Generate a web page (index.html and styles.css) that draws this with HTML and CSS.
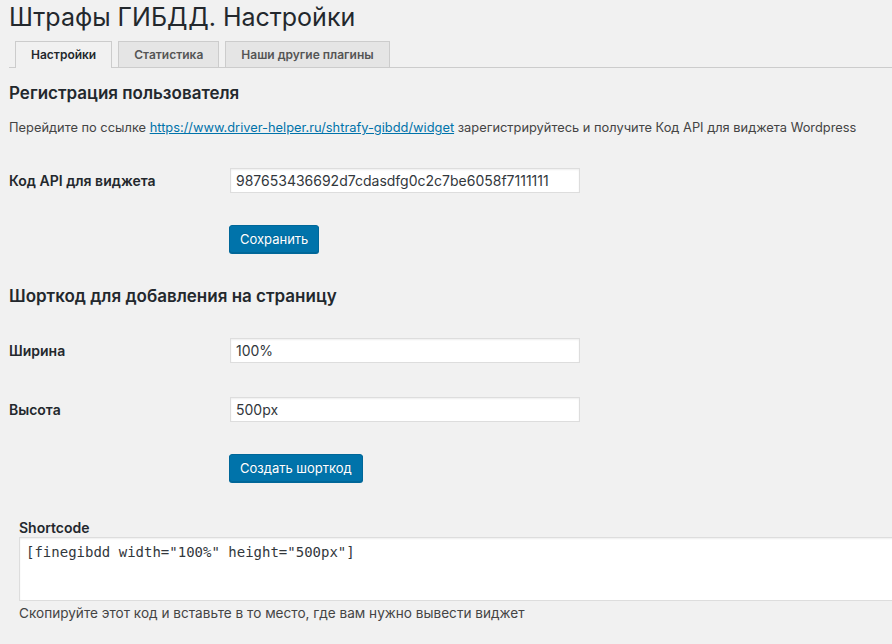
FILE: index.html
```html
<!DOCTYPE html>
<html lang="ru">
<head>
<meta charset="utf-8">
<title>Штрафы ГИБДД. Настройки</title>
<link rel="stylesheet" href="styles.css">
</head>
<body>
<div class="wrap">
  <h1 class="page-title">Штрафы ГИБДД. Настройки</h1>
  <nav class="tabs">
    <a class="tab tab-active" href="#">Настройки</a>
    <a class="tab" href="#">Статистика</a>
    <a class="tab" href="#">Наши другие плагины</a>
  </nav>

  <h2 class="section-title first">Регистрация пользователя</h2>
  <p class="intro">Перейдите по ссылке <a class="link" href="#">https://www.driver-helper.ru/shtrafy-gibdd/widget</a> зарегистрируйтесь и получите Код API для виджета Wordpress</p>

  <div class="form-row row-api">
    <label class="field-label">Код API для виджета</label>
    <input class="field-input" type="text" value="987653436692d7cdasdfg0c2c7be6058f7111111">
  </div>
  <div class="button-row btn-save">
    <button class="button-primary">Сохранить</button>
  </div>

  <h2 class="section-title second">Шорткод для добавления на страницу</h2>

  <div class="form-row row-width">
    <label class="field-label">Ширина</label>
    <input class="field-input" type="text" value="100%">
  </div>
  <div class="form-row row-height">
    <label class="field-label">Высота</label>
    <input class="field-input" type="text" value="500px">
  </div>
  <div class="button-row btn-create">
    <button class="button-primary">Создать шорткод</button>
  </div>

  <div class="shortcode-block">
    <div class="shortcode-label">Shortcode</div>
    <textarea class="shortcode-area">[finegibdd width="100%" height="500px"]</textarea>
    <p class="shortcode-help">Скопируйте этот код и вставьте в то место, где вам нужно вывести виджет</p>
  </div>
</div>
</body>
</html>
```

FILE: styles.css
```css
html, body {
  margin: 0;
  padding: 0;
  overflow: hidden;
}
body {
  background: #f1f1f1;
  color: #444;
  font-family: Inter, "Noto Sans", "Liberation Sans", sans-serif;
  font-size: 13px;
  width: 892px;
  height: 644px;
}
.wrap {
  padding: 2px 0 0 9px;
  overflow: hidden;
}
.page-title {
  margin: 0;
  font-size: 25px;
  line-height: 30px;
  font-weight: 400;
  color: #23282d;
}
.tabs {
  margin-top: 9px;
  display: flex;
  height: 26px;
  border-bottom: 1px solid #ccc;
}
.tab {
  display: block;
  margin-left: 6px;
  padding: 0 15px;
  height: 25px;
  line-height: 25px;
  border: 1px solid #ccc;
  border-bottom: none;
  background: #e5e5e5;
  color: #555;
  font-size: 12px;
  font-weight: 600;
  text-decoration: none;
}
.tab-active {
  background: #f1f1f1;
  color: #23282d;
  height: 26px;
  margin-bottom: -1px;
}
.section-title {
  margin: 0;
  font-size: 17px;
  line-height: 22px;
  font-weight: 600;
  color: #23282d;
}
.section-title.first { margin-top: 14px; }
.section-title.second { margin-top: 32px; }
.intro {
  margin: 14px 0 0;
  line-height: 20px;
  font-size: 12.85px;
  color: #444;
}
.link {
  color: #0073aa;
  text-decoration: underline;
}
.form-row {
  display: flex;
  align-items: center;
  height: 25px;
}
.row-api { margin-top: 30px; }
.row-width { margin-top: 31px; }
.row-height { margin-top: 34px; }
.field-label {
  width: 221px;
  flex: none;
  font-size: 14px;
  font-weight: 600;
  color: #23282d;
}
.field-input {
  box-sizing: border-box;
  width: 350px;
  height: 25px;
  margin: 0;
  padding: 0 5px;
  border: 1px solid #ddd;
  box-shadow: inset 0 1px 2px rgba(0, 0, 0, 0.07);
  background: #fff;
  color: #32373c;
  font-family: Inter, "Noto Sans", "Liberation Sans", sans-serif;
  font-size: 14px;
  outline: none;
}
.button-row {
  padding-left: 220px;
  display: flex;
}
.btn-save { margin-top: 32px; }
.btn-create { margin-top: 32px; }
.button-primary {
  box-sizing: border-box;
  height: 28px;
  margin: 0;
  padding: 0 10px;
  background: #0073aa;
  border: 1px solid #006799;
  border-radius: 3px;
  box-shadow: 0 1px 0 #006799;
  color: #fff;
  font-family: Inter, "Noto Sans", "Liberation Sans", sans-serif;
  font-size: 13px;
  line-height: 26px;
  text-shadow: 0 -1px 1px #006799;
}
.shortcode-block {
  margin-top: 37px;
  padding-left: 10px;
}
.shortcode-label {
  font-size: 14px;
  line-height: 18px;
  font-weight: 600;
  color: #23282d;
}
.shortcode-area {
  display: block;
  box-sizing: border-box;
  width: 900px;
  height: 64px;
  margin: 0;
  padding: 4px 6px 2px;
  border: 1px solid #ddd;
  box-shadow: inset 0 1px 2px rgba(0, 0, 0, 0.07);
  background: #fff;
  color: #32373c;
  font-family: "DejaVu Sans Mono", "Liberation Mono", monospace;
  font-size: 14px;
  line-height: 20px;
  resize: none;
  outline: none;
}
.shortcode-help {
  margin: 2px 0 0;
  font-size: 13.6px;
  line-height: 20px;
  color: #444;
}
```
